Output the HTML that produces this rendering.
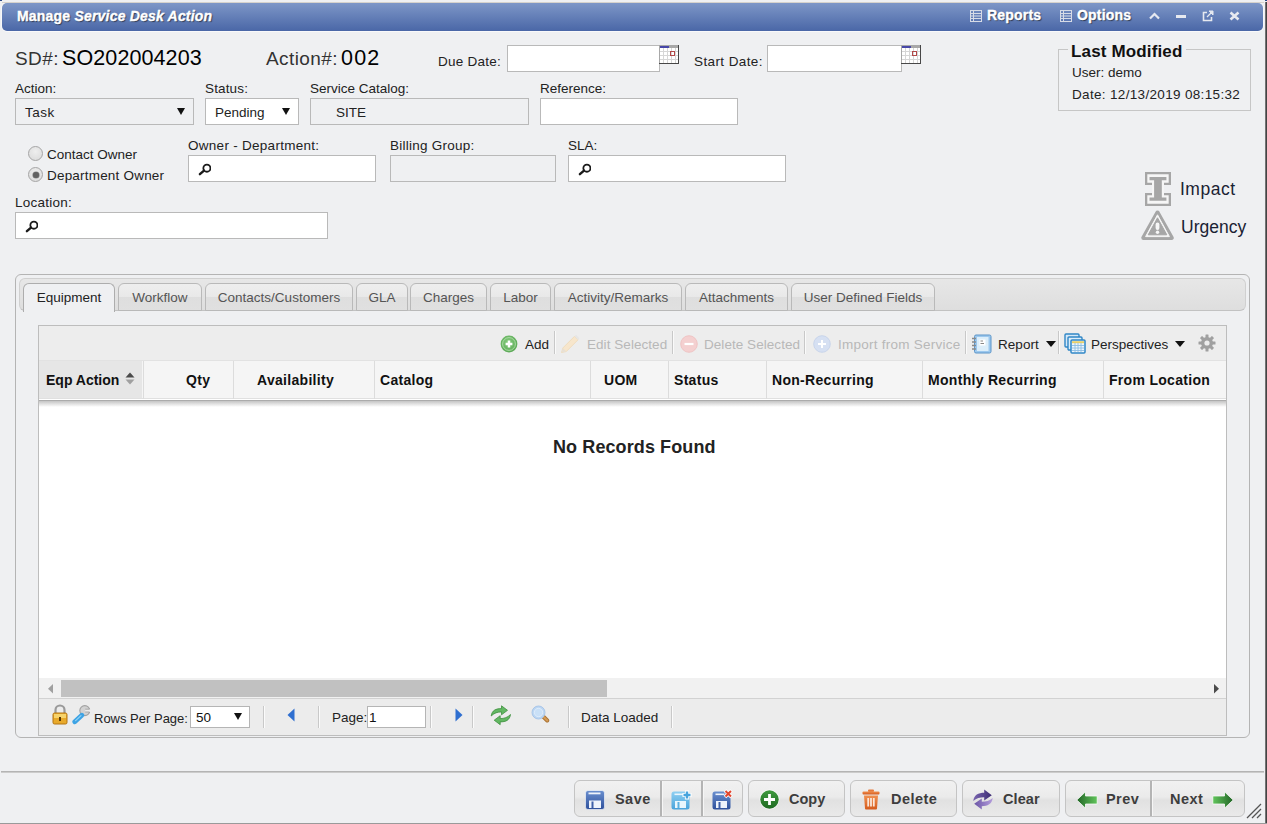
<!DOCTYPE html>
<html><head><meta charset="utf-8">
<style>
*{box-sizing:border-box}
html,body{margin:0;padding:0}
body{width:1267px;height:824px;overflow:hidden;position:relative;background:#eff0f2;font-family:"Liberation Sans",sans-serif;font-size:13px;color:#222}
.a{position:absolute;white-space:nowrap}
.t{position:absolute;white-space:nowrap;line-height:1}
.inp{position:absolute;background:#fff;border:1px solid #b9b9b9}
.dis{background:#eff0f2}
.lbl{position:absolute;white-space:nowrap;line-height:1;font-size:13.5px;color:#222;letter-spacing:0px}
#title{left:2px;top:3px;width:1261px;height:28px;border-radius:5px;background:linear-gradient(#7d96c7,#4a67a7);box-shadow:0 1px 0 rgba(255,255,255,.6),-1px 0 0 rgba(255,255,255,.5),1px 0 0 rgba(255,255,255,.5)}
.tb{position:absolute;color:#fff;font-weight:bold;font-size:14px;line-height:1;text-shadow:1px 1px 1px rgba(0,0,0,.55);-webkit-text-stroke:0.35px #fff}
.caret{position:absolute;width:0;height:0;border-left:4px solid transparent;border-right:4px solid transparent;border-top:7px solid #111}

.cal{width:20px;height:19px;background:#fff;border:1px solid #8a8a8a;border-top:3px solid #5a5fb0;
 background-image:linear-gradient(90deg,transparent 3px,#d4d4d4 3px,#d4d4d4 4px,transparent 4px),linear-gradient(#fff,#fff)}
.radio{width:15px;height:15px;border-radius:50%;border:1px solid #a5a5a5;background:radial-gradient(circle at 50% 35%,#eeeeee,#d9d9d9)}
.radio.on::after{content:"";position:absolute;left:3.5px;top:3.5px;width:6px;height:6px;border-radius:50%;background:#626262;box-shadow:0 0 0 0.6px #8a8a8a}
.mag{width:13px;height:13px}

.tab{position:absolute;top:283px;height:28px;border:1px solid #b9b9b9;border-radius:6px 6px 0 0;background:linear-gradient(#eeeeee 0,#e9e9e9 48%,#dedede 50%,#e0e0e0 100%);text-align:center;font-size:13.5px;line-height:28px;color:#555;letter-spacing:0px;white-space:nowrap}
.tab.act{background:#eff0f2;color:#222;height:29px;border-color:#adadad;border-bottom:none}

.csep{position:absolute;top:361px;width:1px;height:38px;background:#dcdcdc}
.hd{position:absolute;top:373px;font-size:14px;font-weight:bold;line-height:1;color:#111;letter-spacing:0.3px;white-space:nowrap}

.tt{position:absolute;top:337.6px;font-size:13.5px;line-height:1;letter-spacing:0.05px;white-space:nowrap}
.vsep{position:absolute;top:331px;width:1px;height:23px;background:#c8c8c8;box-shadow:1px 0 0 #fafafa}

.pt{position:absolute;top:711px;font-size:13.5px;line-height:1;letter-spacing:0px;color:#222;white-space:nowrap}
.psep{position:absolute;top:706px;width:1px;height:22px;background:#c9c9c9;box-shadow:1px 0 0 #fbfbfb}
.btn{position:absolute;top:780px;height:37px;border:1px solid #c4c4c4;border-radius:6px;background:linear-gradient(#f1f1f1 0,#ebebeb 45%,#e1e1e1 55%,#e9e9e9 100%)}
.bsep{position:absolute;top:781px;width:2px;height:35px;background:#b4b4b4;box-shadow:1px 0 0 #f6f6f6}
.bt{position:absolute;top:792px;font-size:14.5px;font-weight:bold;line-height:1;color:#3d3d3d;letter-spacing:0.45px;white-space:nowrap}
</style></head><body>
<!-- window frame -->
<div class="a" style="left:0;top:0;width:2px;height:1px;background:#2b4a8a"></div>
<div class="a" style="left:1265px;top:0;width:2px;height:1px;background:#2b4a8a"></div>
<div class="a" style="left:2px;top:2px;width:1262px;height:1px;background:#d6d2cc"></div>
<div class="a" style="left:1265px;top:2px;width:2px;height:822px;background:linear-gradient(90deg,#8c8c8c,#2c2c2c)"></div>
<div class="a" style="left:0;top:823px;width:1267px;height:1px;background:#9a9a9a"></div>

<!-- title bar -->
<div id="title" class="a"></div>
<div class="tb" style="left:17px;top:9px;letter-spacing:0.2px">Manage <i>Service Desk Action</i></div>
<div class="tb" style="left:987px;top:8px;letter-spacing:0.2px">Reports</div>
<div class="tb" style="left:1077px;top:8px;letter-spacing:0.2px">Options</div>


<div class="a" style="left:970px;top:10px;line-height:0"><svg width="12" height="12" viewBox="0 0 12 12"><rect x="0.5" y="0.5" width="11" height="11" fill="none" stroke="#d6dbe6" stroke-width="1"/><path d="M3.5 1V11M1 3.5H11M1 6H11M1 8.5H11" stroke="#d6dbe6" stroke-width="1"/></svg></div><div class="a" style="left:1060px;top:10px;line-height:0"><svg width="12" height="12" viewBox="0 0 12 12"><rect x="0.5" y="0.5" width="11" height="11" fill="none" stroke="#d6dbe6" stroke-width="1"/><path d="M3.5 1V11M1 3.5H11M1 6H11M1 8.5H11" stroke="#d6dbe6" stroke-width="1"/></svg></div>
<div class="a" style="left:1149px;top:12px;line-height:0"><svg width="11" height="8" viewBox="0 0 11 8"><path d="M1 6.5 L5.5 2 L10 6.5" fill="none" stroke="#e6e9f0" stroke-width="2.2"/></svg></div>
<div class="a" style="left:1176px;top:15px;width:10px;height:3px;background:#e6e9f0"></div>
<div class="a" style="left:1202px;top:10px;line-height:0"><svg width="12" height="12" viewBox="0 0 12 12"><path d="M5 2.5H1.5V10.5H9.5V7" fill="none" stroke="#e6e9f0" stroke-width="1.6"/><path d="M5 7 L10.5 1.5" stroke="#e6e9f0" stroke-width="1.2"/><path d="M7 1H11V5Z" fill="#e3e7ef" stroke="#e6e9f0" stroke-width="1"/></svg></div>
<div class="a" style="left:1229px;top:11px;line-height:0"><svg width="11" height="10" viewBox="0 0 11 10"><path d="M1.5 1.5 L9.5 8.5 M9.5 1.5 L1.5 8.5" stroke="#e6e9f0" stroke-width="2.6"/></svg></div>

<!-- header numbers -->
<div class="t" style="left:15px;top:49px;font-size:19px;color:#333;letter-spacing:0.4px">SD#:</div>
<div class="t" style="left:62px;top:48px;font-size:21.5px;color:#000;letter-spacing:0.1px">SO202004203</div>
<div class="t" style="left:266px;top:49px;font-size:19px;color:#333;letter-spacing:0.4px">Action#:</div>
<div class="t" style="left:341px;top:48px;font-size:21.5px;color:#000;letter-spacing:1.2px">002</div>

<div class="lbl" style="left:438px;top:55px;letter-spacing:0.25px">Due Date:</div>
<div class="inp" style="left:507px;top:45px;width:153px;height:27px"></div>
<div class="a" style="left:659px;top:45px;line-height:0"><svg width="20" height="19" viewBox="0 0 20 19" shape-rendering="crispEdges"><rect x="0" y="0" width="20" height="19" fill="#fff"/><path d="M4.5 3V18M8.5 3V18M12.5 3V18M16 3V18M1 6.5H19M1 10.5H19M1 14.5H19" stroke="#d6d6d6" stroke-width="1"/><rect x="0" y="0" width="1" height="19" fill="#a8a8a8"/><rect x="0" y="0" width="20" height="1" fill="#a8a8a8"/><rect x="1" y="1" width="18" height="2" fill="#a8a8a8"/><rect x="1" y="1" width="9" height="2" fill="#4747a8"/><rect x="19" y="0" width="1" height="19" fill="#474747"/><rect x="0" y="18" width="20" height="1" fill="#474747"/><rect x="11.5" y="6.5" width="4" height="4" fill="none" stroke="#b24848" stroke-width="1.1"/></svg></div>
<div class="lbl" style="left:694px;top:55px;letter-spacing:0.4px">Start Date:</div>
<div class="inp" style="left:767px;top:45px;width:135px;height:27px"></div>
<div class="a" style="left:901px;top:45px;line-height:0"><svg width="20" height="19" viewBox="0 0 20 19" shape-rendering="crispEdges"><rect x="0" y="0" width="20" height="19" fill="#fff"/><path d="M4.5 3V18M8.5 3V18M12.5 3V18M16 3V18M1 6.5H19M1 10.5H19M1 14.5H19" stroke="#d6d6d6" stroke-width="1"/><rect x="0" y="0" width="1" height="19" fill="#a8a8a8"/><rect x="0" y="0" width="20" height="1" fill="#a8a8a8"/><rect x="1" y="1" width="18" height="2" fill="#a8a8a8"/><rect x="1" y="1" width="9" height="2" fill="#4747a8"/><rect x="19" y="0" width="1" height="19" fill="#474747"/><rect x="0" y="18" width="20" height="1" fill="#474747"/><rect x="11.5" y="6.5" width="4" height="4" fill="none" stroke="#b24848" stroke-width="1.1"/></svg></div>

<!-- row 2 -->
<div class="lbl" style="left:15px;top:82px">Action:</div>
<div class="inp dis" style="left:15px;top:98px;width:179px;height:27px"></div>
<div class="lbl" style="left:25px;top:106px;letter-spacing:0.5px">Task</div>
<div class="caret" style="left:177px;top:108px"></div>

<div class="lbl" style="left:205px;top:82px;letter-spacing:0.15px">Status:</div>
<div class="inp" style="left:205px;top:98px;width:94px;height:27px"></div>
<div class="lbl" style="left:215px;top:106px">Pending</div>
<div class="caret" style="left:282px;top:108px"></div>

<div class="lbl" style="left:310px;top:82px">Service Catalog:</div>
<div class="inp dis" style="left:310px;top:98px;width:219px;height:27px"></div>
<div class="lbl" style="left:336px;top:106px">SITE</div>

<div class="lbl" style="left:540px;top:82px">Reference:</div>
<div class="inp" style="left:540px;top:98px;width:198px;height:27px"></div>

<!-- last modified -->
<div class="a" style="left:1058px;top:49px;width:193px;height:62px;border:1px solid #c6c6c6"></div>
<div class="t" style="left:1068px;top:43px;padding:0 3px;background:#eff0f2;font-size:17px;letter-spacing:0.15px;font-weight:bold;color:#111">Last Modified</div>
<div class="lbl" style="left:1072px;top:66px">User: demo</div>
<div class="lbl" style="left:1072px;top:88px;letter-spacing:0.33px">Date: 12/13/2019 08:15:32</div>

<!-- owner row -->
<div class="radio a" style="left:28px;top:146px"></div>
<div class="lbl" style="left:47px;top:148px">Contact Owner</div>
<div class="radio a on" style="left:28px;top:167px"></div>
<div class="lbl" style="left:47px;top:169px;letter-spacing:0.2px">Department Owner</div>

<div class="lbl" style="left:188px;top:139px;letter-spacing:0.28px">Owner - Department:</div>
<div class="inp" style="left:188px;top:155px;width:188px;height:27px"></div>
<div class="mag a" style="left:198px;top:163px;line-height:0"><svg width="13" height="13" viewBox="0 0 13 13"><circle cx="8.9" cy="5.2" r="3.55" fill="none" stroke="#1a1a1a" stroke-width="1.8"/><path d="M1.9 11.2 L6 7.6" stroke="#1a1a1a" stroke-width="2.4" stroke-linecap="round"/></svg></div>

<div class="lbl" style="left:390px;top:139px;letter-spacing:0.25px">Billing Group:</div>
<div class="inp dis" style="left:390px;top:155px;width:166px;height:27px"></div>

<div class="lbl" style="left:568px;top:139px">SLA:</div>
<div class="inp" style="left:568px;top:155px;width:218px;height:27px"></div>
<div class="mag a" style="left:578px;top:163px;line-height:0"><svg width="13" height="13" viewBox="0 0 13 13"><circle cx="8.9" cy="5.2" r="3.55" fill="none" stroke="#1a1a1a" stroke-width="1.8"/><path d="M1.9 11.2 L6 7.6" stroke="#1a1a1a" stroke-width="2.4" stroke-linecap="round"/></svg></div>

<div class="lbl" style="left:15px;top:196px;letter-spacing:0.25px">Location:</div>
<div class="inp" style="left:15px;top:212px;width:313px;height:27px"></div>
<div class="mag a" style="left:25px;top:220px;line-height:0"><svg width="13" height="13" viewBox="0 0 13 13"><circle cx="8.9" cy="5.2" r="3.55" fill="none" stroke="#1a1a1a" stroke-width="1.8"/><path d="M1.9 11.2 L6 7.6" stroke="#1a1a1a" stroke-width="2.4" stroke-linecap="round"/></svg></div>

<!-- impact / urgency -->
<div class="a" style="left:1145px;top:172px;line-height:0"><svg width="26" height="34" viewBox="0 0 26 34"><path d="M0 0H26V13H19V21H26V34H0V21H7V13H0Z" fill="#a6a6a6"/><path d="M2.3 2.3H23.7V10.8H19V23.2H23.7V31.7H2.3V23.2H7V10.8H2.3Z" fill="#f6f6f6"/><path d="M4.5 5H21.4V8.2H16.8V25.5H21.4V28.7H4.5V25.5H9.1V8.2H4.5Z" fill="#a6a6a6"/></svg></div>
<div class="t" style="left:1180px;top:181px;font-size:17.5px;color:#1a2233;letter-spacing:0.5px">Impact</div>
<div class="a" style="left:1141px;top:210px;line-height:0"><svg width="33" height="31" viewBox="0 0 33 31"><path d="M16.5 2.8 L30.5 27.8 H2.5 Z" fill="#a6a6a6" stroke="#a6a6a6" stroke-width="4.5" stroke-linejoin="round"/><path d="M16.5 4.8 L28.4 26.6 H4.6 Z" fill="#f6f6f6" stroke="#f6f6f6" stroke-width="1" stroke-linejoin="round"/><path d="M16.5 7.8 L25.8 24.8 H7.2 Z" fill="#a6a6a6" stroke="#a6a6a6" stroke-width="1" stroke-linejoin="round"/><rect x="14.6" y="12.5" width="3.8" height="7.5" rx="1.9" fill="#f6f6f6"/><circle cx="16.5" cy="22.3" r="1.7" fill="#f6f6f6"/></svg></div>
<div class="t" style="left:1181px;top:219px;font-size:17.5px;color:#1a2233">Urgency</div>

<!-- tab panel -->
<div class="a" style="left:15px;top:274px;width:1235px;height:464px;border:1px solid #b4b4b4;border-radius:6px"></div>
<div class="a" style="left:19px;top:278px;width:1227px;height:33px;border:1px solid #d0d0d0;border-bottom:1px solid #c2c2c2;border-radius:6px 6px 6px 6px;background:linear-gradient(#e7e7e7,#dedede)"></div>
<div class="tab act" style="left:23px;width:92px">Equipment</div>
<div class="tab" style="left:118px;width:84px">Workflow</div>
<div class="tab" style="left:205px;width:148px">Contacts/Customers</div>
<div class="tab" style="left:356px;width:52px">GLA</div>
<div class="tab" style="left:410px;width:77px">Charges</div>
<div class="tab" style="left:490px;width:61px">Labor</div>
<div class="tab" style="left:554px;width:128px">Activity/Remarks</div>
<div class="tab" style="left:685px;width:103px">Attachments</div>
<div class="tab" style="left:791px;width:144px">User Defined Fields</div>

<!-- grid -->
<div class="a" style="left:38px;top:325px;width:1189px;height:411px;border:1px solid #bdbdbd;background:#fff"></div>
<div class="a" style="left:39px;top:326px;width:1187px;height:35px;background:#ededed;border-bottom:1px solid #e2e2e2"></div>
<div class="a" style="left:39px;top:361px;width:1187px;height:37px;background:#f5f5f5"></div>
<div class="a" style="left:39px;top:398px;width:1187px;height:1px;background:#e0e0e0"></div>
<div class="a" style="left:39px;top:400px;width:1187px;height:1px;background:#ababab"></div>
<div class="a" style="left:39px;top:401px;width:1187px;height:6px;background:linear-gradient(#c4c4c4,rgba(255,255,255,0))"></div>
<div class="a" style="left:39px;top:361px;width:103px;height:37px;background:#e6e6e6"></div>


<!-- column separators & headers -->
<div class="csep" style="left:143px"></div>
<div class="csep" style="left:233px"></div>
<div class="csep" style="left:374px"></div>
<div class="csep" style="left:590px"></div>
<div class="csep" style="left:668px"></div>
<div class="csep" style="left:766px"></div>
<div class="csep" style="left:922px"></div>
<div class="csep" style="left:1103px"></div>
<div class="hd" style="left:46px;letter-spacing:0px">Eqp Action</div>
<div class="a" style="left:125px;top:372px;line-height:0"><svg width="10" height="13" viewBox="0 0 10 13"><path d="M5 0.5 L9.5 5.5 H0.5Z" fill="#4a4a4a"/><path d="M5 12.5 L9.5 7.5 H0.5Z" fill="#a0a0a0"/></svg></div>
<div class="hd" style="left:186px">Qty</div>
<div class="hd" style="left:257px">Availability</div>
<div class="hd" style="left:380px">Catalog</div>
<div class="hd" style="left:604px">UOM</div>
<div class="hd" style="left:674px">Status</div>
<div class="hd" style="left:772px">Non-Recurring</div>
<div class="hd" style="left:928px">Monthly Recurring</div>
<div class="hd" style="left:1109px">From Location</div>

<div class="t" style="left:553px;top:438px;font-size:18px;font-weight:bold;color:#222;letter-spacing:0.1px">No Records Found</div>

<!-- scrollbar -->
<div class="a" style="left:39px;top:678px;width:1187px;height:20px;background:#f1f1f1"></div>
<div class="a" style="left:61px;top:680px;width:546px;height:17px;background:#c1c1c1"></div>
<div class="a" style="left:48px;top:684px;line-height:0"><svg width="6" height="10" viewBox="0 0 6 10"><path d="M5 0 V9.5 L0 4.75Z" fill="#a0a0a0"/></svg></div>
<div class="a" style="left:1214px;top:684px;line-height:0"><svg width="6" height="10" viewBox="0 0 6 10"><path d="M0 0 V9.5 L5 4.75Z" fill="#4a4a4a"/></svg></div>

<!-- pager -->
<div class="a" style="left:39px;top:698px;width:1187px;height:37px;background:#ececec;border-top:1px solid #d2d2d2"></div>


<!-- toolbar -->
<div class="a" style="left:500px;top:335px;line-height:0"><svg width="18" height="18" viewBox="0 0 18 18"><defs><radialGradient id="gA" cx="45%" cy="40%" r="65%"><stop offset="0" stop-color="#86cc7e"/><stop offset="1" stop-color="#58a653"/></radialGradient></defs><circle cx="9" cy="9" r="8.4" fill="url(#gA)"/><circle cx="9" cy="9" r="6.4" fill="none" stroke="#b2dfab" stroke-width="0.9"/><path d="M9 5.6V12.4M5.6 9H12.4" stroke="#fff" stroke-width="2.5"/></svg></div>
<div class="tt" style="left:525px;color:#222">Add</div>
<div class="vsep" style="left:554px"></div>
<div class="a" style="left:560px;top:334px;line-height:0"><svg width="20" height="20" viewBox="0 0 20 20"><path d="M1.5 18.5 L2.8 14 L14.5 2.3 L18 5.8 L6.3 17.5 Z" fill="#f7e6cc" stroke="#efd9b6" stroke-width="0.8"/><path d="M14.5 2.3 L16.2 0.8 L19.5 4.2 L18 5.8Z" fill="#e6e6e6"/><path d="M1.5 18.5 L2.8 14 L6.3 17.5Z" fill="#e8e0d4"/></svg></div>
<div class="tt" style="left:587px;color:#b8b8b8">Edit Selected</div>
<div class="vsep" style="left:672px"></div>
<div class="a" style="left:680px;top:335px;line-height:0"><svg width="18" height="18" viewBox="0 0 18 18"><circle cx="9" cy="9" r="8.3" fill="#f4d0d0" stroke="#eebcbc" stroke-width="0.8"/><path d="M4.5 9H13.5" stroke="#fff" stroke-width="2.2"/></svg></div>
<div class="tt" style="left:704px;color:#b8b8b8">Delete Selected</div>
<div class="vsep" style="left:804px"></div>
<div class="a" style="left:813px;top:335px;line-height:0"><svg width="18" height="18" viewBox="0 0 18 18"><circle cx="9" cy="9" r="8.3" fill="#d6e0f2" stroke="#c2cfe8" stroke-width="0.8"/><path d="M9 5V13M5 9H13" stroke="#fff" stroke-width="2"/></svg></div>
<div class="tt" style="left:838px;color:#b8b8b8;letter-spacing:0.25px">Import from Service</div>
<div class="vsep" style="left:965px"></div>
<div class="a" style="left:971px;top:334px;line-height:0"><svg width="21" height="20" viewBox="0 0 21 20"><rect x="3.5" y="1" width="16.5" height="18" rx="1.5" fill="#9cc8ee" stroke="#5c95c8" stroke-width="1"/><rect x="6" y="3" width="11.5" height="14" fill="#dceefa"/><rect x="8.5" y="5.5" width="6" height="6" fill="#fff"/><path d="M9.5 7H12M9.5 9.5H13" stroke="#6a6a6a" stroke-width="0.8"/><path d="M1 4.5h4M1 8h4M1 11.5h4M1 15h4" stroke="#8a8a8a" stroke-width="1.3"/></svg></div>
<div class="tt" style="left:998px;color:#222">Report</div>
<div class="caret" style="left:1046px;top:341px;border-left-width:5px;border-right-width:5px;border-top-width:6px"></div>
<div class="vsep" style="left:1058px"></div>
<div class="a" style="left:1064px;top:333px;line-height:0"><svg width="22" height="21" viewBox="0 0 22 21"><rect x="1" y="1" width="14" height="13" rx="1" fill="#d4e8f7" stroke="#2f86c6" stroke-width="1.4"/><rect x="4" y="4" width="14" height="13" rx="1" fill="#dcedf9" stroke="#2f86c6" stroke-width="1.4"/><rect x="7" y="7" width="14" height="13" rx="1" fill="#eef6fc" stroke="#2f86c6" stroke-width="1.5"/><rect x="8" y="8.2" width="12" height="2" fill="#e8cf6a"/><path d="M8 12.5h12M8 15h12M8 17.5h12M11 10v9M14 10v9M17 10v9" stroke="#8cbde3" stroke-width="0.9"/></svg></div>
<div class="tt" style="left:1091px;color:#222;letter-spacing:0px">Perspectives</div>
<div class="caret" style="left:1175px;top:341px;border-left-width:5px;border-right-width:5px;border-top-width:6px"></div>
<div class="a" style="left:1198px;top:334px;line-height:0"><svg width="18" height="18" viewBox="0 0 18 18"><g fill="#a0a0a0"><circle cx="9" cy="9" r="6"/><rect x="7.5" y="0.5" width="3" height="17" rx="0.5"/><rect x="7.5" y="0.5" width="3" height="17" rx="0.5" transform="rotate(45 9 9)"/><rect x="7.5" y="0.5" width="3" height="17" rx="0.5" transform="rotate(90 9 9)"/><rect x="7.5" y="0.5" width="3" height="17" rx="0.5" transform="rotate(135 9 9)"/></g><circle cx="9" cy="9" r="2.6" fill="#ededed"/></svg></div>


<!-- pager contents -->
<div class="a" style="left:52px;top:704px;line-height:0"><svg width="16" height="21" viewBox="0 0 16 21"><path d="M3.5 9V6A4.5 4.5 0 0 1 12.5 6V9" fill="none" stroke="#9a9a9a" stroke-width="2.2"/><rect x="1" y="9" width="14" height="11" rx="1.5" fill="#e8a92a" stroke="#b37512" stroke-width="1"/><rect x="2" y="10" width="12" height="4" fill="#f7d36a"/><rect x="7" y="13" width="2" height="4" fill="#5a3a08"/></svg></div>
<div class="a" style="left:72px;top:704px;line-height:0"><svg width="19" height="21" viewBox="0 0 19 21"><circle cx="12.8" cy="6.6" r="5" fill="#d2d2d2" stroke="#a2a2a2" stroke-width="1.1"/><path d="M13.2 5.2H19V8H13.2Z" fill="#ececec"/><path d="M13.2 5.2H17.5M13.2 8H17.5" stroke="#a2a2a2" stroke-width="0.9"/><path d="M2.8 17.8 L9.8 11.2" stroke="#3da3e4" stroke-width="4.8" stroke-linecap="round"/><path d="M3.6 16.6 L9 11.6" stroke="#92d3f6" stroke-width="1.2" stroke-linecap="round"/></svg></div>
<div class="pt" style="left:94px;letter-spacing:0px;font-size:13px;top:712px">Rows Per Page:</div>
<div class="inp" style="left:190px;top:706px;width:60px;height:22px;border-color:#b5b5b5"></div>
<div class="pt" style="left:196px;color:#111">50</div>
<div class="caret" style="left:234px;top:713px"></div>
<div class="psep" style="left:263px"></div>
<div class="a" style="left:287px;top:708px;line-height:0"><svg width="8" height="14" viewBox="0 0 8 14"><path d="M7.5 0.5V13.5L0.5 7Z" fill="#2f6fd0"/></svg></div>
<div class="psep" style="left:318px"></div>
<div class="pt" style="left:332px">Page:</div>
<div class="inp" style="left:367px;top:706px;width:59px;height:22px;border-color:#b5b5b5"></div>
<div class="pt" style="left:369px;color:#111">1</div>
<div class="psep" style="left:430px"></div>
<div class="a" style="left:455px;top:708px;line-height:0"><svg width="8" height="14" viewBox="0 0 8 14"><path d="M0.5 0.5V13.5L7.5 7Z" fill="#2f6fd0"/></svg></div>
<div class="psep" style="left:472px"></div>
<div class="a" style="left:490px;top:705px;line-height:0"><svg width="22" height="21" viewBox="0 0 22 21"><path d="M1.2 11 C2 5.2 6 3.6 11.5 3.6 V0.8 L17.5 5.3 L11.5 9.8 V6.9 C7.5 6.9 4.2 8 1.2 11 Z" fill="#62b862" stroke="#3f8f3f" stroke-width="0.8" stroke-linejoin="round"/><path d="M20.5 9.5 C19.7 15.3 15.7 16.9 10.2 16.9 V19.7 L4.2 15.2 L10.2 10.7 V13.6 C14.2 13.6 17.5 12.5 20.5 9.5 Z" fill="#62b862" stroke="#3f8f3f" stroke-width="0.8" stroke-linejoin="round"/></svg></div>
<div class="a" style="left:531px;top:705px;line-height:0"><svg width="19" height="19" viewBox="0 0 19 19"><path d="M12.2 11.5 L16.2 15.5" stroke="#a8702f" stroke-width="4" stroke-linecap="round"/><path d="M12.2 11.5 L16.2 15.5" stroke="#d39a56" stroke-width="2.4" stroke-linecap="round"/><circle cx="7.5" cy="7.5" r="6.5" fill="#bcd6f2" stroke="#a9c6e9" stroke-width="1"/><circle cx="7.5" cy="7.5" r="4.2" fill="#c9e0f7" stroke="#e3effb" stroke-width="0.8"/></svg></div>
<div class="psep" style="left:568px"></div>
<div class="pt" style="left:581px;letter-spacing:0px">Data Loaded</div>
<div class="psep" style="left:671px"></div>

<!-- bottom bar -->
<div class="a" style="left:1px;top:771px;width:1263px;height:2px;background:linear-gradient(#a8a8a8,#d8d8d8)"></div>
<div class="btn" style="left:574px;width:169px"></div>
<div class="bsep" style="left:660px"></div>
<div class="bsep" style="left:701px"></div>
<div class="btn" style="left:748px;width:97px"></div>
<div class="btn" style="left:850px;width:107px"></div>
<div class="btn" style="left:962px;width:98px"></div>
<div class="btn" style="left:1065px;width:180px"></div>
<div class="bsep" style="left:1150px"></div>
<div class="bt" style="left:615px">Save</div>
<div class="bt" style="left:789px;letter-spacing:0px">Copy</div>
<div class="bt" style="left:891px">Delete</div>
<div class="bt" style="left:1003px;letter-spacing:0.1px">Clear</div>
<div class="bt" style="left:1106px">Prev</div>
<div class="bt" style="left:1170px">Next</div>

<!-- button icons -->
<div class="a" style="left:585px;top:790px;line-height:0"><svg width="20" height="20" viewBox="0 0 20 20"><defs><linearGradient id="fb" x1="0" y1="0" x2="0" y2="1"><stop offset="0" stop-color="#6a8fcf"/><stop offset="1" stop-color="#2e509b"/></linearGradient></defs><rect x="0.5" y="0.5" width="19" height="19" rx="2.5" fill="url(#fb)" stroke="#fff" stroke-opacity=".6"/><rect x="3.5" y="2.5" width="12" height="1.8" fill="#eef3fb"/><rect x="4" y="10.5" width="12" height="7.5" fill="#eef3fb"/><rect x="6.5" y="11.5" width="2" height="6.5" fill="#3d5fa8"/></svg></div>
<div class="a" style="left:671px;top:790px;line-height:0"><svg width="21" height="20" viewBox="0 0 21 20"><defs><linearGradient id="fl" x1="0" y1="0" x2="0" y2="1"><stop offset="0" stop-color="#8fd0f2"/><stop offset="1" stop-color="#4aa3db"/></linearGradient></defs><rect x="0.5" y="1.5" width="18" height="18" rx="2.5" fill="url(#fl)"/><rect x="3.5" y="3.5" width="9" height="1.6" fill="#eaf6fd"/><rect x="4" y="11" width="11" height="7" fill="#eaf6fd"/><rect x="6.5" y="12" width="2" height="6" fill="#5cb0e0"/><path d="M16 0.5V9.5M11.5 5H20.5" stroke="#fff" stroke-width="4.2"/><path d="M16 1.5V8.5M12.5 5H19.5" stroke="#47a4dd" stroke-width="2.4"/></svg></div>
<div class="a" style="left:712px;top:789px;line-height:0"><svg width="21" height="21" viewBox="0 0 21 21"><rect x="0.5" y="2.5" width="18" height="18" rx="2.5" fill="url(#fb)"/><rect x="3.5" y="4.5" width="9" height="1.6" fill="#eef3fb"/><rect x="4" y="12" width="11" height="7" fill="#eef3fb"/><rect x="6.5" y="13" width="2" height="6" fill="#3d5fa8"/><path d="M13 1.5L19.5 8M19.5 1.5L13 8" stroke="#fff" stroke-width="3.6"/><path d="M13.5 2L19 7.5M19 2L13.5 7.5" stroke="#e2462e" stroke-width="2"/></svg></div>
<div class="a" style="left:759px;top:789px;line-height:0"><svg width="21" height="21" viewBox="0 0 21 21"><defs><linearGradient id="gc" x1="0" y1="0" x2="0" y2="1"><stop offset="0" stop-color="#3f9a3f"/><stop offset="1" stop-color="#1f6b22"/></linearGradient></defs><circle cx="10.5" cy="10.5" r="10" fill="#fff" fill-opacity=".7"/><circle cx="10.5" cy="10.5" r="9.2" fill="url(#gc)"/><path d="M10.5 5V16M5 10.5H16" stroke="#fff" stroke-width="2.8"/></svg></div>
<div class="a" style="left:862px;top:789px;line-height:0"><svg width="18" height="21" viewBox="0 0 18 21"><defs><linearGradient id="gt" x1="0" y1="0" x2="0" y2="1"><stop offset="0" stop-color="#f09050"/><stop offset="1" stop-color="#d55a1c"/></linearGradient></defs><rect x="6" y="0.5" width="6" height="2.5" rx="1" fill="#e67a3c"/><rect x="0.5" y="2.5" width="17" height="3" rx="1" fill="url(#gt)"/><path d="M2 6.5H16L15 19.5Q15 20.5 14 20.5H4Q3 20.5 3 19.5Z" fill="url(#gt)"/><path d="M6.2 9V17.5M9 9V17.5M11.8 9V17.5" stroke="#fbe6d8" stroke-width="1.8"/></svg></div>
<div class="a" style="left:972px;top:789px;line-height:0"><svg width="22" height="21" viewBox="0 0 22 21"><defs><linearGradient id="gp1" x1="0" y1="0" x2="1" y2="0"><stop offset="0" stop-color="#7a66b0"/><stop offset="1" stop-color="#3c2c74"/></linearGradient><linearGradient id="gp2" x1="0" y1="0" x2="1" y2="0"><stop offset="0" stop-color="#6a55a5"/><stop offset="1" stop-color="#b49ddc"/></linearGradient></defs><path d="M1.3 12 C1.8 6 6.5 3.8 12.2 3.8 V0.6 L19.8 6.2 L12.2 11.4 V8.2 C7.8 8.2 4.5 9.2 1.3 12Z" fill="url(#gp1)"/><path d="M20.7 9 C20.2 15 15.5 17.2 9.8 17.2 V20.4 L2.2 14.8 L9.8 9.6 V12.8 C14.2 12.8 17.5 11.8 20.7 9Z" fill="url(#gp2)"/></svg></div>
<div class="a" style="left:1076px;top:791px;line-height:0"><svg width="22" height="18" viewBox="0 0 22 18"><defs><linearGradient id="ga" x1="0" y1="0" x2="1" y2="0"><stop offset="0" stop-color="#226526"/><stop offset="1" stop-color="#62c55c"/></linearGradient></defs><path d="M0.8 9 L9.5 0.8 V5 H21.2 V13 H9.5 V17.2Z" fill="url(#ga)" stroke="#fff" stroke-opacity=".85" stroke-width="0.9" stroke-linejoin="round"/></svg></div>
<div class="a" style="left:1212px;top:791px;line-height:0"><svg width="22" height="18" viewBox="0 0 22 18"><defs><linearGradient id="gb" x1="0" y1="0" x2="1" y2="0"><stop offset="0" stop-color="#62c55c"/><stop offset="1" stop-color="#226526"/></linearGradient></defs><path d="M21.2 9 L12.5 0.8 V5 H0.8 V13 H12.5 V17.2Z" fill="url(#gb)" stroke="#fff" stroke-opacity=".85" stroke-width="0.9" stroke-linejoin="round"/></svg></div>

<!-- resize grip -->
<div class="a" style="left:1246px;top:803px;line-height:0"><svg width="16" height="16" viewBox="0 0 16 16"><path d="M15 1 L1 15 M15 6 L6 15 M15 11 L11 15" stroke="#555" stroke-width="1.3"/></svg></div>

</body></html>
